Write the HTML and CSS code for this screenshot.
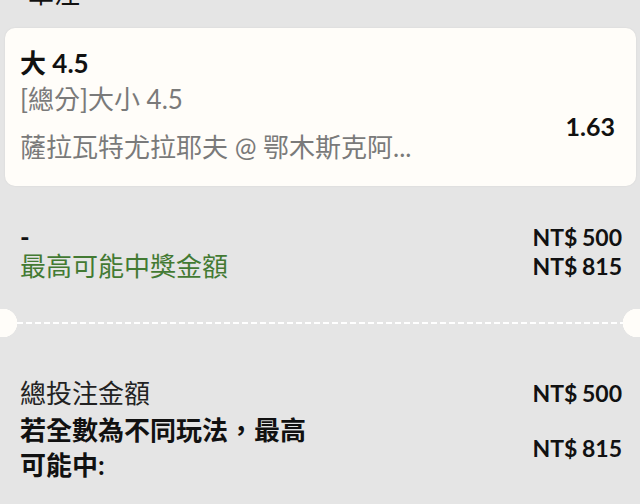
FILE: index.html
```html
<!DOCTYPE html>
<html lang="zh-Hant">
<head>
    <meta charset="UTF-8">
    <meta name="viewport" content="width=device-width, initial-scale=1.0">
    <title>單注</title>
    <link rel="stylesheet" href="styles.css">
</head>
<body>

    <h2 class="slip-title">單注</h2>

    <!-- 投注選項 -->
    <div class="bet-card">
        <div class="bet-info">
            <div class="bet-pick">大 4.5</div>
            <div class="bet-market">[總分]大小 4.5</div>
            <div class="bet-event">薩拉瓦特尤拉耶夫 @ 鄂木斯克阿...</div>
        </div>
        <div class="bet-odds">1.63</div>
    </div>

    <div class="summary">
        <div class="summary-row">
            <span class="dash">-</span>
            <span class="amount">NT$ 500</span>
        </div>
        <div class="summary-row">
            <span class="win-label">最高可能中獎金額</span>
            <span class="amount">NT$ 815</span>
        </div>
    </div>

    <div class="divider"></div>

    <div class="totals">
        <div class="summary-row">
            <span class="total-label">總投注金額</span>
            <span class="amount">NT$ 500</span>
        </div>
        <div class="summary-row total-win">
            <span class="total-win-label">若全數為不同玩法，最高可能中:</span>
            <span class="amount">NT$ 815</span>
        </div>
    </div>

</body>
</html>
```

FILE: styles.css
```css
body {
    font-family: Lato, "Noto Sans CJK TC", sans-serif;
    background-color: #e5e5e5;
    color: #111;
    margin: 0;
    padding: 0;
    overflow: hidden;
}

.slip-title {
    font-size: 26px;
    font-weight: normal;
    line-height: 30px;
    margin: -22px 0 0 28px;
}

.bet-card {
    display: flex;
    justify-content: space-between;
    margin: 20px 4px 0 5px;
    padding: 17px 21px 21px 15px;
    background-color: #fffdf9;
    border-radius: 10px;
    box-shadow: 0 0 2px rgba(0, 0, 0, 0.08);
}

.bet-info {
    font-size: 26px;
    line-height: 36px;
}

.bet-pick {
    font-weight: bold;
}

.bet-market {
    color: #7a7a7a;
}

.bet-event {
    color: #7a7a7a;
    margin-top: 12px;
}

.bet-odds {
    align-self: flex-end;
    margin-bottom: 21px;
    font-size: 25px;
    line-height: 36px;
    font-weight: bold;
}

.summary {
    margin-top: 37px;
    padding: 0 18px 0 20px;
}

.summary-row {
    display: flex;
    justify-content: space-between;
    align-items: center;
    font-size: 26px;
    line-height: 29px;
}

.amount {
    font-size: 23px;
    font-weight: bold;
    word-spacing: -1px;
}

.dash {
    font-weight: bold;
}

.win-label {
    color: #437a33;
}

.divider {
    position: relative;
    height: 28px;
    margin-top: 28px;
}

.divider::after {
    content: "";
    position: absolute;
    left: 17px;
    right: 17px;
    top: 13px;
    height: 2px;
    background: repeating-linear-gradient(to right, #fff 0, #fff 6px, transparent 6px, transparent 9px);
}

.divider::before {
    content: "";
    position: absolute;
    left: -11px;
    right: -11px;
    top: 0;
    height: 28px;
    background:
        radial-gradient(circle at 14px 14px, #fffdf9 14px, transparent 14.5px) left / 28px 28px no-repeat,
        radial-gradient(circle at 14px 14px, #fffdf9 14px, transparent 14.5px) right / 28px 28px no-repeat;
}

.totals {
    margin-top: 42px;
    padding: 0 18px 0 20px;
}

.total-label {
    color: #222;
}

.total-win {
    margin-top: 5px;
}

.total-win-label {
    font-weight: bold;
    line-height: 35px;
    max-width: 295px;
}
```
